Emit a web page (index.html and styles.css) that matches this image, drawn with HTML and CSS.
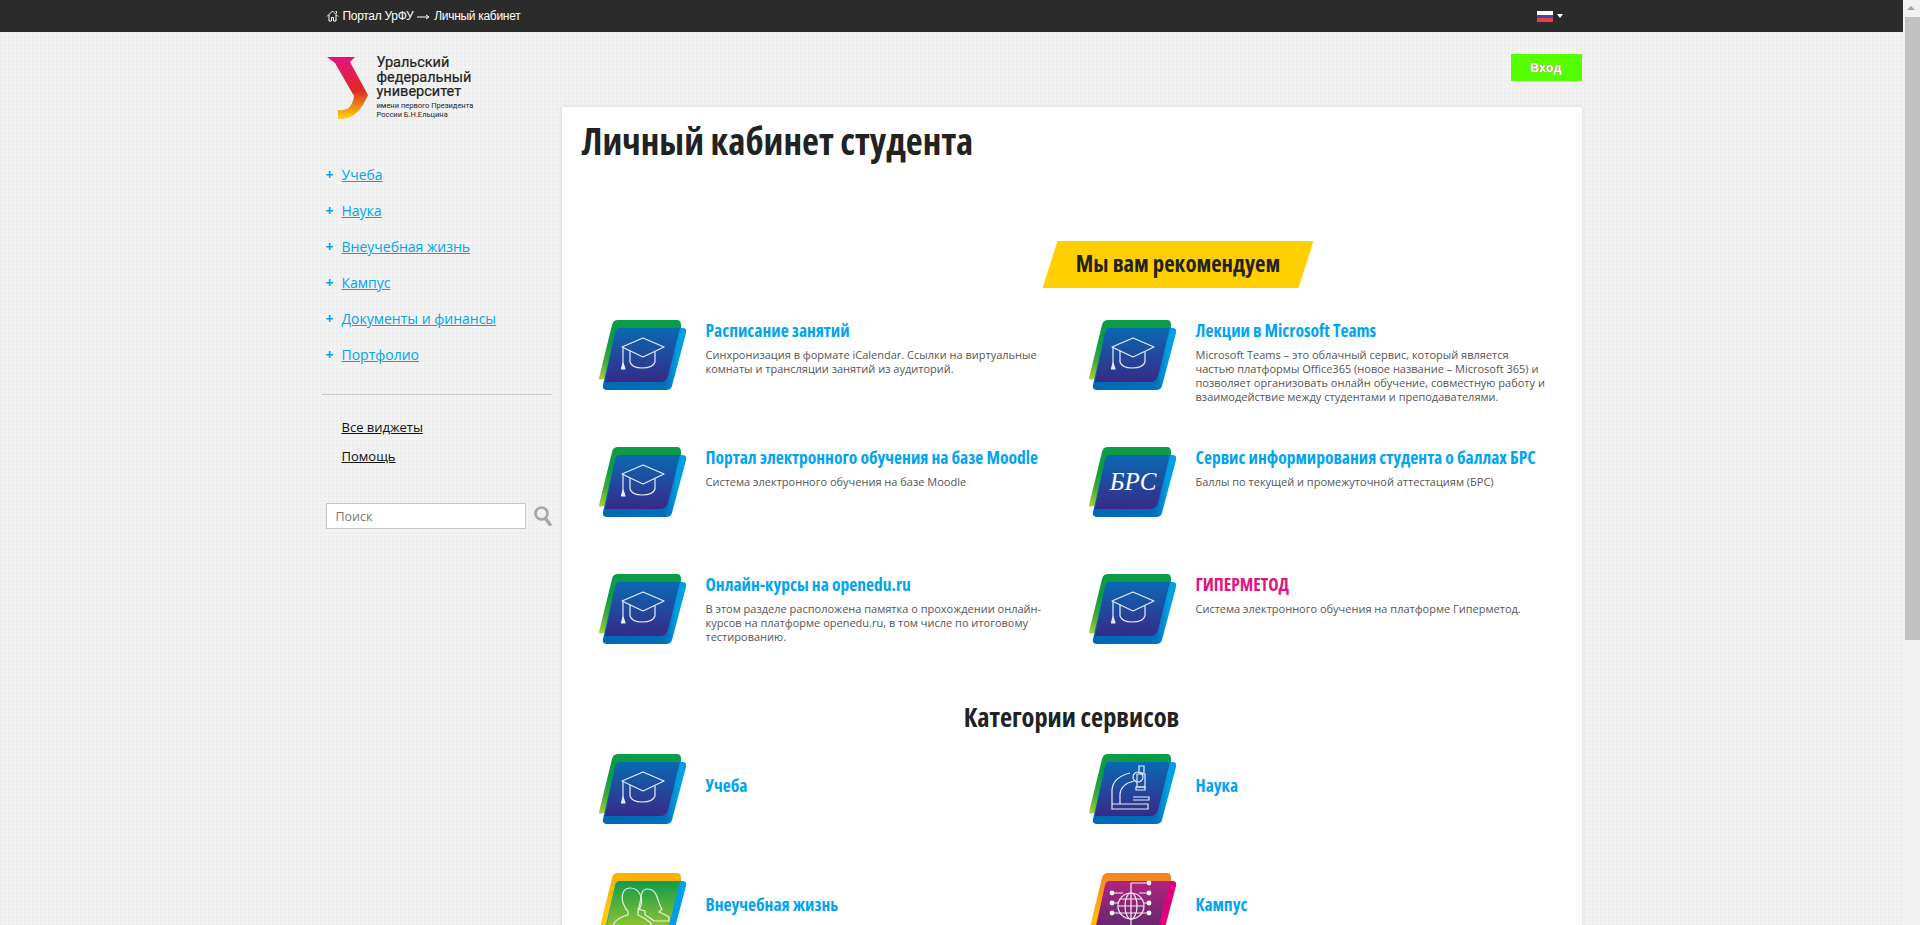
FILE: index.html
```html
<!DOCTYPE html>
<html lang="ru">
<head>
<meta charset="utf-8">
<title>Личный кабинет студента</title>
<link rel="stylesheet" href="styles.css">
</head>
<body>
<svg class="defs" width="0" height="0" aria-hidden="true">
  <defs>
    <linearGradient id="backBlue" x1="0" y1="1" x2="0.35" y2="0"><stop offset="0" stop-color="#b5d334"/><stop offset=".3" stop-color="#3faa3a"/><stop offset=".6" stop-color="#0c9c48"/><stop offset="1" stop-color="#0c9c48"/></linearGradient>
    <linearGradient id="midBlue" x1="0" y1="0" x2="1" y2="0"><stop offset="0" stop-color="#0068b4"/><stop offset=".75" stop-color="#0070bb"/><stop offset=".9" stop-color="#009fe3"/></linearGradient>
    <linearGradient id="frontBlue" x1="0" y1="0" x2="0" y2="1"><stop offset="0" stop-color="#0a69b3"/><stop offset="1" stop-color="#372a87"/></linearGradient>
    <linearGradient id="backOrange" x1="0" y1="1" x2="0.3" y2="0"><stop offset="0" stop-color="#ffd500"/><stop offset="1" stop-color="#fbb000"/></linearGradient>
    <linearGradient id="frontGreen" x1="0" y1="0" x2="0" y2="1"><stop offset="0" stop-color="#0f9c49"/><stop offset="1" stop-color="#a9c92d"/></linearGradient>
    <linearGradient id="backRed" x1="0" y1="1" x2="0.3" y2="0"><stop offset="0" stop-color="#ffd000"/><stop offset=".5" stop-color="#f9a51a"/><stop offset="1" stop-color="#f18421"/></linearGradient>
    <linearGradient id="frontPurple" x1="0" y1="0" x2="0" y2="1"><stop offset="0" stop-color="#b2237f"/><stop offset="1" stop-color="#552a6c"/></linearGradient>
    <linearGradient id="logoGrad" x1="0" y1="0" x2="0" y2="1"><stop offset="0" stop-color="#e5127f"/><stop offset=".55" stop-color="#dd2a27"/><stop offset=".8" stop-color="#f08a12"/><stop offset="1" stop-color="#ffd800"/></linearGradient>
    <symbol id="cap" viewBox="0 0 87 72">
      <g fill="none" stroke="#fff" stroke-width="1.2" opacity=".9" stroke-linejoin="round" stroke-linecap="round">
        <path d="M44 18 L65 27 L44 37 L23 27 Z"/>
        <path d="M31 31 V42 Q33 48 43 48 Q54 48 56 42 V32"/>
        <path d="M24 28 V43"/>
        <path d="M24 43 L22.5 49 H26 Z" fill="#fff"/>
      </g>
    </symbol>
    <symbol id="scope" viewBox="0 0 87 72">
      <g fill="none" stroke="#fff" stroke-width="1.2" opacity=".9">
        <path d="M23 50 H59 V55 H23 Z"/>
        <path d="M23 50 V36 Q24 23 41 19"/>
        <path d="M31 50 V40 Q32 30 45 27"/>
        <path d="M44 43 H60 V46 H44"/>
        <path d="M49 18 A5 5 0 1 0 49 28 A5 5 0 1 0 49 18"/>
        <path d="M50 12 H55 V19 H50 Z"/>
        <path d="M48 20 H56 V33 H48 Z"/>
        <path d="M47 33 H56 V36 H47 Z"/>
      </g>
    </symbol>
    <symbol id="people" viewBox="0 0 87 72">
      <g fill="none" stroke="#fff" stroke-width="1.2" opacity=".85">
        <path d="M31 15 C22 15 22 27 25 32 Q27 37 29 38 V42 Q20 44 15 50 V58 H52 V50 Q46 45 39 42 V38 Q41 36 42 32 C44 26 41 15 31 15 Z"/>
        <path d="M48 16 C40 16 43 30 39 36 L46 38 V42 Q52 45 55 48 H70 V44 Q65 41 60 39 L63 36 C58 30 60 16 48 16 Z"/>
      </g>
    </symbol>
    <symbol id="globe" viewBox="0 0 87 72">
      <g fill="none" stroke="#fff" stroke-width="1.2" opacity=".92">
        <circle cx="42" cy="33" r="13"/>
        <ellipse cx="42" cy="33" rx="6" ry="13"/>
        <path d="M29 33 H55 M31 26 H53 M31 40 H53 M42 10 V58 M42 10 H60 M23 20 H34 M23 30 H29 M23 40 H31 M50 20 H60 M55 30 H60 M53 40 H60"/>
      </g>
      <g fill="#fff"><circle cx="60" cy="10" r="2.4"/><circle cx="23" cy="20" r="2.4"/><circle cx="23" cy="30" r="2.4"/><circle cx="23" cy="40" r="2.4"/><circle cx="60" cy="20" r="2.4"/><circle cx="60" cy="30" r="2.4"/><circle cx="60" cy="40" r="2.4"/></g>
    </symbol>
    <symbol id="tileBlue" viewBox="0 0 87 72">
      <path fill="url(#backBlue)" d="M19 0 H78 Q82 0 82 5 V9 L12 60 L4 59 Q0 61 0 58 L13 5 Q14 0 19 0 Z"/>
      <path fill="url(#midBlue)" d="M21 8 H84 Q88 8 87 13 L73 66 Q72 70 67 70 H8 Q3 70 4 65 L16 13 Q17 8 21 8 Z"/>
      <path fill="url(#frontBlue)" d="M21 8 H81 L69 56 Q67 62 61 62 H6 L16 13 Q17 8 21 8 Z"/>
    </symbol>
    <symbol id="tileGreen" viewBox="0 0 87 72">
      <path fill="url(#backOrange)" d="M19 0 H78 Q82 0 82 5 V9 L12 60 L4 59 Q0 61 0 58 L13 5 Q14 0 19 0 Z"/>
      <path fill="#009fe3" d="M21 8 H84 Q88 8 87 13 L73 66 Q72 70 67 70 H8 Q3 70 4 65 L16 13 Q17 8 21 8 Z"/>
      <path fill="url(#frontGreen)" d="M21 8 H81 L69 56 Q67 62 61 62 H6 L16 13 Q17 8 21 8 Z"/>
    </symbol>
    <symbol id="tilePurple" viewBox="0 0 87 72">
      <path fill="url(#backRed)" d="M19 0 H78 Q82 0 82 5 V9 L12 60 L4 59 Q0 61 0 58 L13 5 Q14 0 19 0 Z"/>
      <path fill="#e2007a" d="M21 8 H84 Q88 8 87 13 L73 66 Q72 70 67 70 H8 Q3 70 4 65 L16 13 Q17 8 21 8 Z"/>
      <path fill="url(#frontPurple)" d="M21 8 H81 L69 56 Q67 62 61 62 H6 L16 13 Q17 8 21 8 Z"/>
    </symbol>
  </defs>
</svg>

<div class="scrollbar" aria-hidden="true"><span class="sb-up"></span><span class="sb-thumb"></span></div>

<header class="topbar">
  <div class="topbar-in">
    <nav class="crumbs">
      <svg class="home" width="13" height="12" viewBox="0 0 13 12"><path d="M1 6.5 L6.5 1 L12 6.5 M3 5 V11 H5.5 V7.5 H7.5 V11 H10 V5 M9.5 1.5 H10.5 V3.5" fill="none" stroke="#fff" stroke-width="1"/></svg>
      <span>Портал УрФУ</span>
      <svg class="arrow" width="13" height="7" viewBox="0 0 13 7"><path d="M0 4 H11 M9 2 L12 4 L9 6" fill="none" stroke="#fff" stroke-width="1"/></svg>
      <span>Личный кабинет</span>
    </nav>
    <div class="lang"><span class="flag"></span><span class="caret"></span></div>
  </div>
</header>

<div class="page">
  <aside class="side">
    <div class="logo">
      <svg class="logo-mark" width="44" height="66" viewBox="0 0 44 66"><path fill="url(#logoGrad)" d="M1 1 H29 L24 6 L42 39 C37 50 30 63 14 63 Q11 63 12 60 L12 54 Q26 56 28 40 L9 7 Z"/></svg>
      <div class="logo-text">
        <div class="logo-big">Уральский<br>федеральный<br>университет</div>
        <div class="logo-small">имени первого Президента<br>России Б.Н.Ельцина</div>
      </div>
    </div>
    <ul class="menu">
      <li><a href="#">Учеба</a></li>
      <li><a href="#">Наука</a></li>
      <li><a href="#">Внеучебная жизнь</a></li>
      <li><a href="#">Кампус</a></li>
      <li><a href="#">Документы и финансы</a></li>
      <li><a href="#">Портфолио</a></li>
    </ul>
    <div class="links">
      <a href="#">Все виджеты</a>
      <a href="#">Помощь</a>
    </div>
    <form class="search">
      <input type="text" placeholder="Поиск">
      <svg width="18" height="20" viewBox="0 0 18 20"><circle cx="7.5" cy="7.5" r="6" fill="none" stroke="#a6a6a6" stroke-width="2.6"/><path d="M11.5 12.5 L16 18.5" stroke="#a6a6a6" stroke-width="3.4" stroke-linecap="round"/></svg>
    </form>
  </aside>

  <main class="main">
    <div class="login-row"><a class="login" href="#">Вход</a></div>
    <section class="card">
      <h1>Личный кабинет студента</h1>
      <h2 class="banner">Мы вам рекомендуем</h2>
      <div class="grid rec">
        <article class="item">
          <svg class="tile" viewBox="0 0 87 72"><use href="#tileBlue"/><use href="#cap"/></svg>
          <div><h3>Расписание занятий</h3><p>Синхронизация в формате iCalendar. Ссылки на виртуальные комнаты и трансляции занятий из аудиторий.</p></div>
        </article>
        <article class="item">
          <svg class="tile" viewBox="0 0 87 72"><use href="#tileBlue"/><use href="#cap"/></svg>
          <div><h3>Лекции в Microsoft Teams</h3><p>Microsoft Teams – это облачный сервис, который является частью платформы Office365 (новое название – Microsoft 365) и позволяет организовать онлайн обучение, совместную работу и взаимодействие между студентами и преподавателями.</p></div>
        </article>
        <article class="item">
          <svg class="tile" viewBox="0 0 87 72"><use href="#tileBlue"/><use href="#cap"/></svg>
          <div><h3>Портал электронного обучения на базе Moodle</h3><p>Система электронного обучения на базе Moodle</p></div>
        </article>
        <article class="item">
          <svg class="tile" viewBox="0 0 87 72"><use href="#tileBlue"/><text class="brs" x="44" y="43" text-anchor="middle">БРС</text></svg>
          <div><h3>Сервис информирования студента о баллах БРС</h3><p>Баллы по текущей и промежуточной аттестациям (БРС)</p></div>
        </article>
        <article class="item">
          <svg class="tile" viewBox="0 0 87 72"><use href="#tileBlue"/><use href="#cap"/></svg>
          <div><h3>Онлайн-курсы на openedu.ru</h3><p>В этом разделе расположена памятка о прохождении онлайн-курсов на платформе openedu.ru, в том числе по итоговому тестированию.</p></div>
        </article>
        <article class="item">
          <svg class="tile" viewBox="0 0 87 72"><use href="#tileBlue"/><use href="#cap"/></svg>
          <div><h3 class="hot">ГИПЕРМЕТОД</h3><p>Система электронного обучения на платформе Гиперметод.</p></div>
        </article>
      </div>
      <h2 class="cats">Категории сервисов</h2>
      <div class="grid catgrid">
        <article class="item mid">
          <svg class="tile" viewBox="0 0 87 72"><use href="#tileBlue"/><use href="#cap"/></svg>
          <h3>Учеба</h3>
        </article>
        <article class="item mid">
          <svg class="tile" viewBox="0 0 87 72"><use href="#tileBlue"/><use href="#scope"/></svg>
          <h3>Наука</h3>
        </article>
        <article class="item mid">
          <svg class="tile" viewBox="0 0 87 72"><use href="#tileGreen"/><use href="#people"/></svg>
          <h3>Внеучебная жизнь</h3>
        </article>
        <article class="item mid">
          <svg class="tile" viewBox="0 0 87 72"><use href="#tilePurple"/><use href="#globe"/></svg>
          <h3>Кампус</h3>
        </article>
      </div>
    </section>
  </main>
</div>
</body>
</html>
```

FILE: styles.css
```css
* { box-sizing: border-box; }
html { background: #f2f2f2; }
body {
  margin: 0 17px 0 0;
  font-family: "Open Sans", sans-serif;
  color: #222;
  background-color: #f2f2f2;
  background-image: radial-gradient(circle at 1px 1px, #ececec .8px, transparent 1px);
  background-size: 4px 4px;
}
.defs { position: absolute; }
.scrollbar { position: fixed; top: 0; right: 0; bottom: 0; width: 17px; background: #f1f1f1; }
.sb-up {
  position: absolute; top: 6px; left: 4px;
  border: 4px solid transparent; border-bottom: 4px solid #a3a3a3; border-top: 0;
}
.sb-thumb { position: absolute; top: 17px; left: 2px; right: 0; height: 623px; background: #c1c1c1; }
.topbar { background: #2b2b2b; height: 32px; }
.topbar-in {
  width: 1260px; margin: 0 auto; height: 100%;
  display: flex; align-items: center; justify-content: space-between;
  padding-left: 4px;
}
.crumbs {
  display: flex; align-items: center; gap: 4px;
  font: 12px "Liberation Sans", sans-serif; color: #fff; letter-spacing: -.3px;
}
.lang { display: flex; align-items: center; gap: 4px; margin-right: 19px; }
.flag {
  width: 16px; height: 11px;
  background: linear-gradient(#fff 0 33%, #2b4cc0 33% 66%, #f03c3c 66%);
}
.caret { border: 3px solid transparent; border-top: 4px solid #fff; border-bottom: 0; }
.page { width: 1260px; margin: 0 auto; display: flex; align-items: flex-start; }
.side { width: 240px; flex: none; }
.logo { display: flex; gap: 7px; margin: 24px 0 0 4px; }
.logo-mark { flex: none; }
.logo-text { font-family: Roboto, sans-serif; color: #222; }
.logo-big { font-size: 14.5px; line-height: 14.5px; -webkit-text-stroke: .2px #222; }
.logo-small { font-size: 7.5px; line-height: 9px; margin-top: 1px; }
.menu { list-style: none; margin: 35px 0 0; padding: 0 0 21px; border-bottom: 1px solid #ccc; width: 230px; }
.menu li { height: 36px; line-height: 36px; padding-left: 4px; font-size: 14px; display: flex; align-items: center; }
.menu li::before { content: "+"; color: #00a4ef; font-weight: 700; width: 16px; font-size: 14px; }
.menu a { color: #00a4ef; }
.links { padding: 23px 0 0 20px; display: flex; flex-direction: column; gap: 11px; font-size: 13px; line-height: 18px; }
.links a { color: #111; align-self: flex-start; }
.search { display: flex; align-items: center; gap: 8px; margin: 38px 0 0 4px; }
.search input {
  width: 200px; height: 26px; border: 1px solid #c8c8c8; background: #fff;
  padding: 0 9px; font: 12.5px "Open Sans", sans-serif;
}
.search input::placeholder { color: #777; opacity: 1; }
.main { width: 1020px; flex: none; }
.login-row { display: flex; justify-content: flex-end; padding-top: 22px; height: 75px; }
.login {
  width: 71px; height: 27px; background: #55ff00; color: #fff;
  font: 700 12px/28px "Liberation Sans", sans-serif; text-align: center;
  text-decoration: none; letter-spacing: .5px;
  text-shadow: 0 0 1px #ff30b0;
}
.card {
  background: #fff; box-shadow: 0 0 4px rgba(0,0,0,.12);
  padding: 9px 0 0; min-height: 1216px;
}
h1, h2, h3 { font-stretch: 75%; font-weight: 700; margin: 0; }
h1 { font-size: 37px; line-height: 50px; padding-left: 20px; color: #222; }
.banner {
  width: 271px; height: 47px; margin: 75px 0 0 481px;
  background: #ffcf00; clip-path: polygon(15px 0, 100% 0, 256px 100%, 0 100%);
  font-size: 22.7px; line-height: 45px; text-align: center; color: #222;
}
.grid { display: grid; grid-template-columns: 490px 490px; padding-left: 37px; }
.rec { grid-auto-rows: 127px; margin-top: 32px; }
.item { display: flex; gap: 20px; }
.tile { width: 87px; height: 72px; flex: none; }
.item > div { width: 350px; margin-top: -1px; }
h3 { font-size: 17.5px; line-height: 22px; color: #00a4ef; }
h3.hot { color: #e5127f; }
.item p { margin: 7px 0 0; font-size: 11px; line-height: 14px; color: #555; }
.brs { font: italic 25px "Liberation Serif", serif; fill: #fff; }
.cats { text-align: center; font-size: 26.4px; line-height: 36px; margin-top: -2px; color: #222; }
.catgrid { grid-auto-rows: 119px; margin-top: 19px; }
.mid { align-items: center; height: 72px; }
.mid h3 { margin-bottom: 11px; }
```
